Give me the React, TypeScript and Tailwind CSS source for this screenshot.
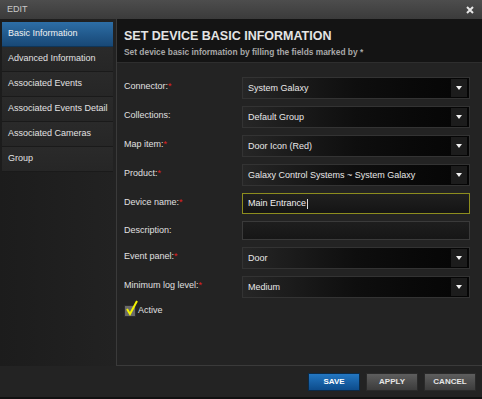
import React from "react";

const menu = [
  "Basic Information",
  "Advanced Information",
  "Associated Events",
  "Associated Events Detail",
  "Associated Cameras",
  "Group",
];

type Row =
  | { label: string; req: boolean; kind: "select"; value: string }
  | { label: string; req: boolean; kind: "input"; value: string; focus?: boolean };

const rows: Row[] = [
  { label: "Connector:", req: true, kind: "select", value: "System Galaxy" },
  { label: "Collections:", req: false, kind: "select", value: "Default Group" },
  { label: "Map item:", req: true, kind: "select", value: "Door Icon (Red)" },
  { label: "Product:", req: true, kind: "select", value: "Galaxy Control Systems ~ System Galaxy" },
  { label: "Device name:", req: true, kind: "input", value: "Main Entrance", focus: true },
  { label: "Description:", req: false, kind: "input", value: "" },
  { label: "Event panel:", req: true, kind: "select", value: "Door" },
  { label: "Minimum log level:", req: true, kind: "select", value: "Medium" },
];

function Select({ value }: { value: string }) {
  return (
    <div className="flex h-[22px] w-[228px] items-stretch border border-[#333] bg-gradient-to-r from-[#262626] via-[#0e0e0e] to-[#050505]">
      <div className="flex flex-1 items-center pl-[5px] pt-px text-[9px] text-[#e8e8e8]">{value}</div>
      <div className="my-[1px] mr-[2px] flex w-[16px] items-center justify-center bg-[#1c1c1c]">
        <svg width="6" height="4" viewBox="0 0 6 4">
          <path d="M0 0h6L3 4z" fill="#f2f2f2" />
        </svg>
      </div>
    </div>
  );
}

function Input({ value, focus, h }: { value: string; focus?: boolean; h: string }) {
  return (
    <div
      className={`flex w-[228px] items-center pl-[5px] text-[9px] text-[#f0f0f0] ${h} ${
        focus
          ? "border border-[#8d8d1e] bg-gradient-to-b from-[#202020] to-[#141414]"
          : "border border-[#3a3a3a] bg-gradient-to-b from-[#1e1e1e] to-[#161616]"
      }`}
    >
      {value}
      {focus && <span className="ml-[1px] h-[10px] w-px bg-[#ddd]" />}
    </div>
  );
}

export default function App() {
  return (
    <div
      className="flex h-[399px] w-[482px] flex-col overflow-hidden bg-[#121212]"
      style={{ fontFamily: '"Liberation Sans", Arial, sans-serif' }}
    >
      {/* Title bar */}
      <div className="flex h-[19px] items-center justify-between bg-gradient-to-b from-[#4d4d4d] to-[#3b3b3b] pl-[7px] pr-[8px]">
        <span className="text-[9px] text-[#c9c9c9]">EDIT</span>
        <svg width="8" height="8" viewBox="0 0 8 8">
          <path d="M1 1l6 6M7 1L1 7" stroke="#e6e6e6" strokeWidth="2" />
        </svg>
      </div>

      <div className="flex flex-1 flex-col bg-[#232323]">
        <div className="flex flex-1">
          {/* Sidebar */}
          <div className="flex w-[116px] flex-col bg-gradient-to-r from-[#1c1c1c] to-[#222] pl-[2px] pr-[3px] pt-[3px]">
            {menu.map((m, i) => (
              <div
                key={m}
                className={`flex h-[25px] items-center border-b pl-[6px] text-[9px] ${
                  i === 0
                    ? "border-[#0f3558] bg-gradient-to-b from-[#2d6ea6] to-[#184876] text-[#f2f2f2]"
                    : "border-[#1a1a1a] bg-gradient-to-b from-[#2a2a2a] to-[#262626] text-[#e2e2e2]"
                }`}
              >
                {m}
              </div>
            ))}
          </div>

          {/* Main */}
          <div className="flex flex-1 flex-col border-b border-l border-[#3a3a3a]">
            <div className="h-[44px] border-b border-[#2e2e2e] bg-[#141414] pl-[7px] pt-[10px]">
              <div className="text-[12.5px] font-bold leading-[14px] text-[#e4e4e4]">
                SET DEVICE BASIC INFORMATION
              </div>
              <div className="mt-[3px] text-[8.4px] font-bold text-[#a8a8a8]">
                Set device basic information by filling the fields marked by *
              </div>
            </div>

            <div className="flex flex-1 flex-col gap-[7px] pl-[7px] pt-[14px]">
              {rows.map((r) => (
                <div key={r.label} className="flex items-start">
                  <div className="w-[118px] pt-[4px] text-[9px] leading-[11px] text-[#e0e0e0]">
                    {r.label}
                    {r.req && <span className="text-[#e02020]">*</span>}
                  </div>
                  {r.kind === "select" ? (
                    <Select value={r.value} />
                  ) : (
                    <Input
                      value={r.value}
                      focus={r.focus}
                      h={r.focus ? "h-[21px]" : "h-[19px]"}
                    />
                  )}
                </div>
              ))}
              <div className="-mt-[1px] flex items-center">
                <div className="relative h-[12px] w-[12px] border border-[#2c2c2c] bg-[#6a6a6a]">
                  <svg
                    className="absolute -top-[6px] left-[1px]"
                    width="12"
                    height="16"
                    viewBox="0 0 12 16"
                  >
                    <path
                      d="M1 9l3 5L11 1"
                      fill="none"
                      stroke="#f2f200"
                      strokeWidth="2"
                    />
                  </svg>
                </div>
                <span className="ml-[2px] text-[9px] text-[#e0e0e0]">Active</span>
              </div>
            </div>
          </div>
        </div>

        {/* Footer */}
        <div className="flex h-[31px] items-center justify-end gap-[6px] pr-[6px]">
          <button className="h-[18px] w-[52px] border border-[#0b2a47] bg-gradient-to-b from-[#2377c2] to-[#0d4c8c] text-[8px] font-bold text-white">
            SAVE
          </button>
          <button className="h-[18px] w-[52px] border border-[#2a2a2a] bg-gradient-to-b from-[#5e5e5e] to-[#3c3c3c] text-[8px] font-bold text-[#e6e6e6]">
            APPLY
          </button>
          <button className="h-[18px] w-[52px] border border-[#2a2a2a] bg-gradient-to-b from-[#5e5e5e] to-[#3c3c3c] text-[8px] font-bold text-[#e6e6e6]">
            CANCEL
          </button>
        </div>
        <div className="h-[2px] bg-[#111]" />
      </div>
    </div>
  );
}
